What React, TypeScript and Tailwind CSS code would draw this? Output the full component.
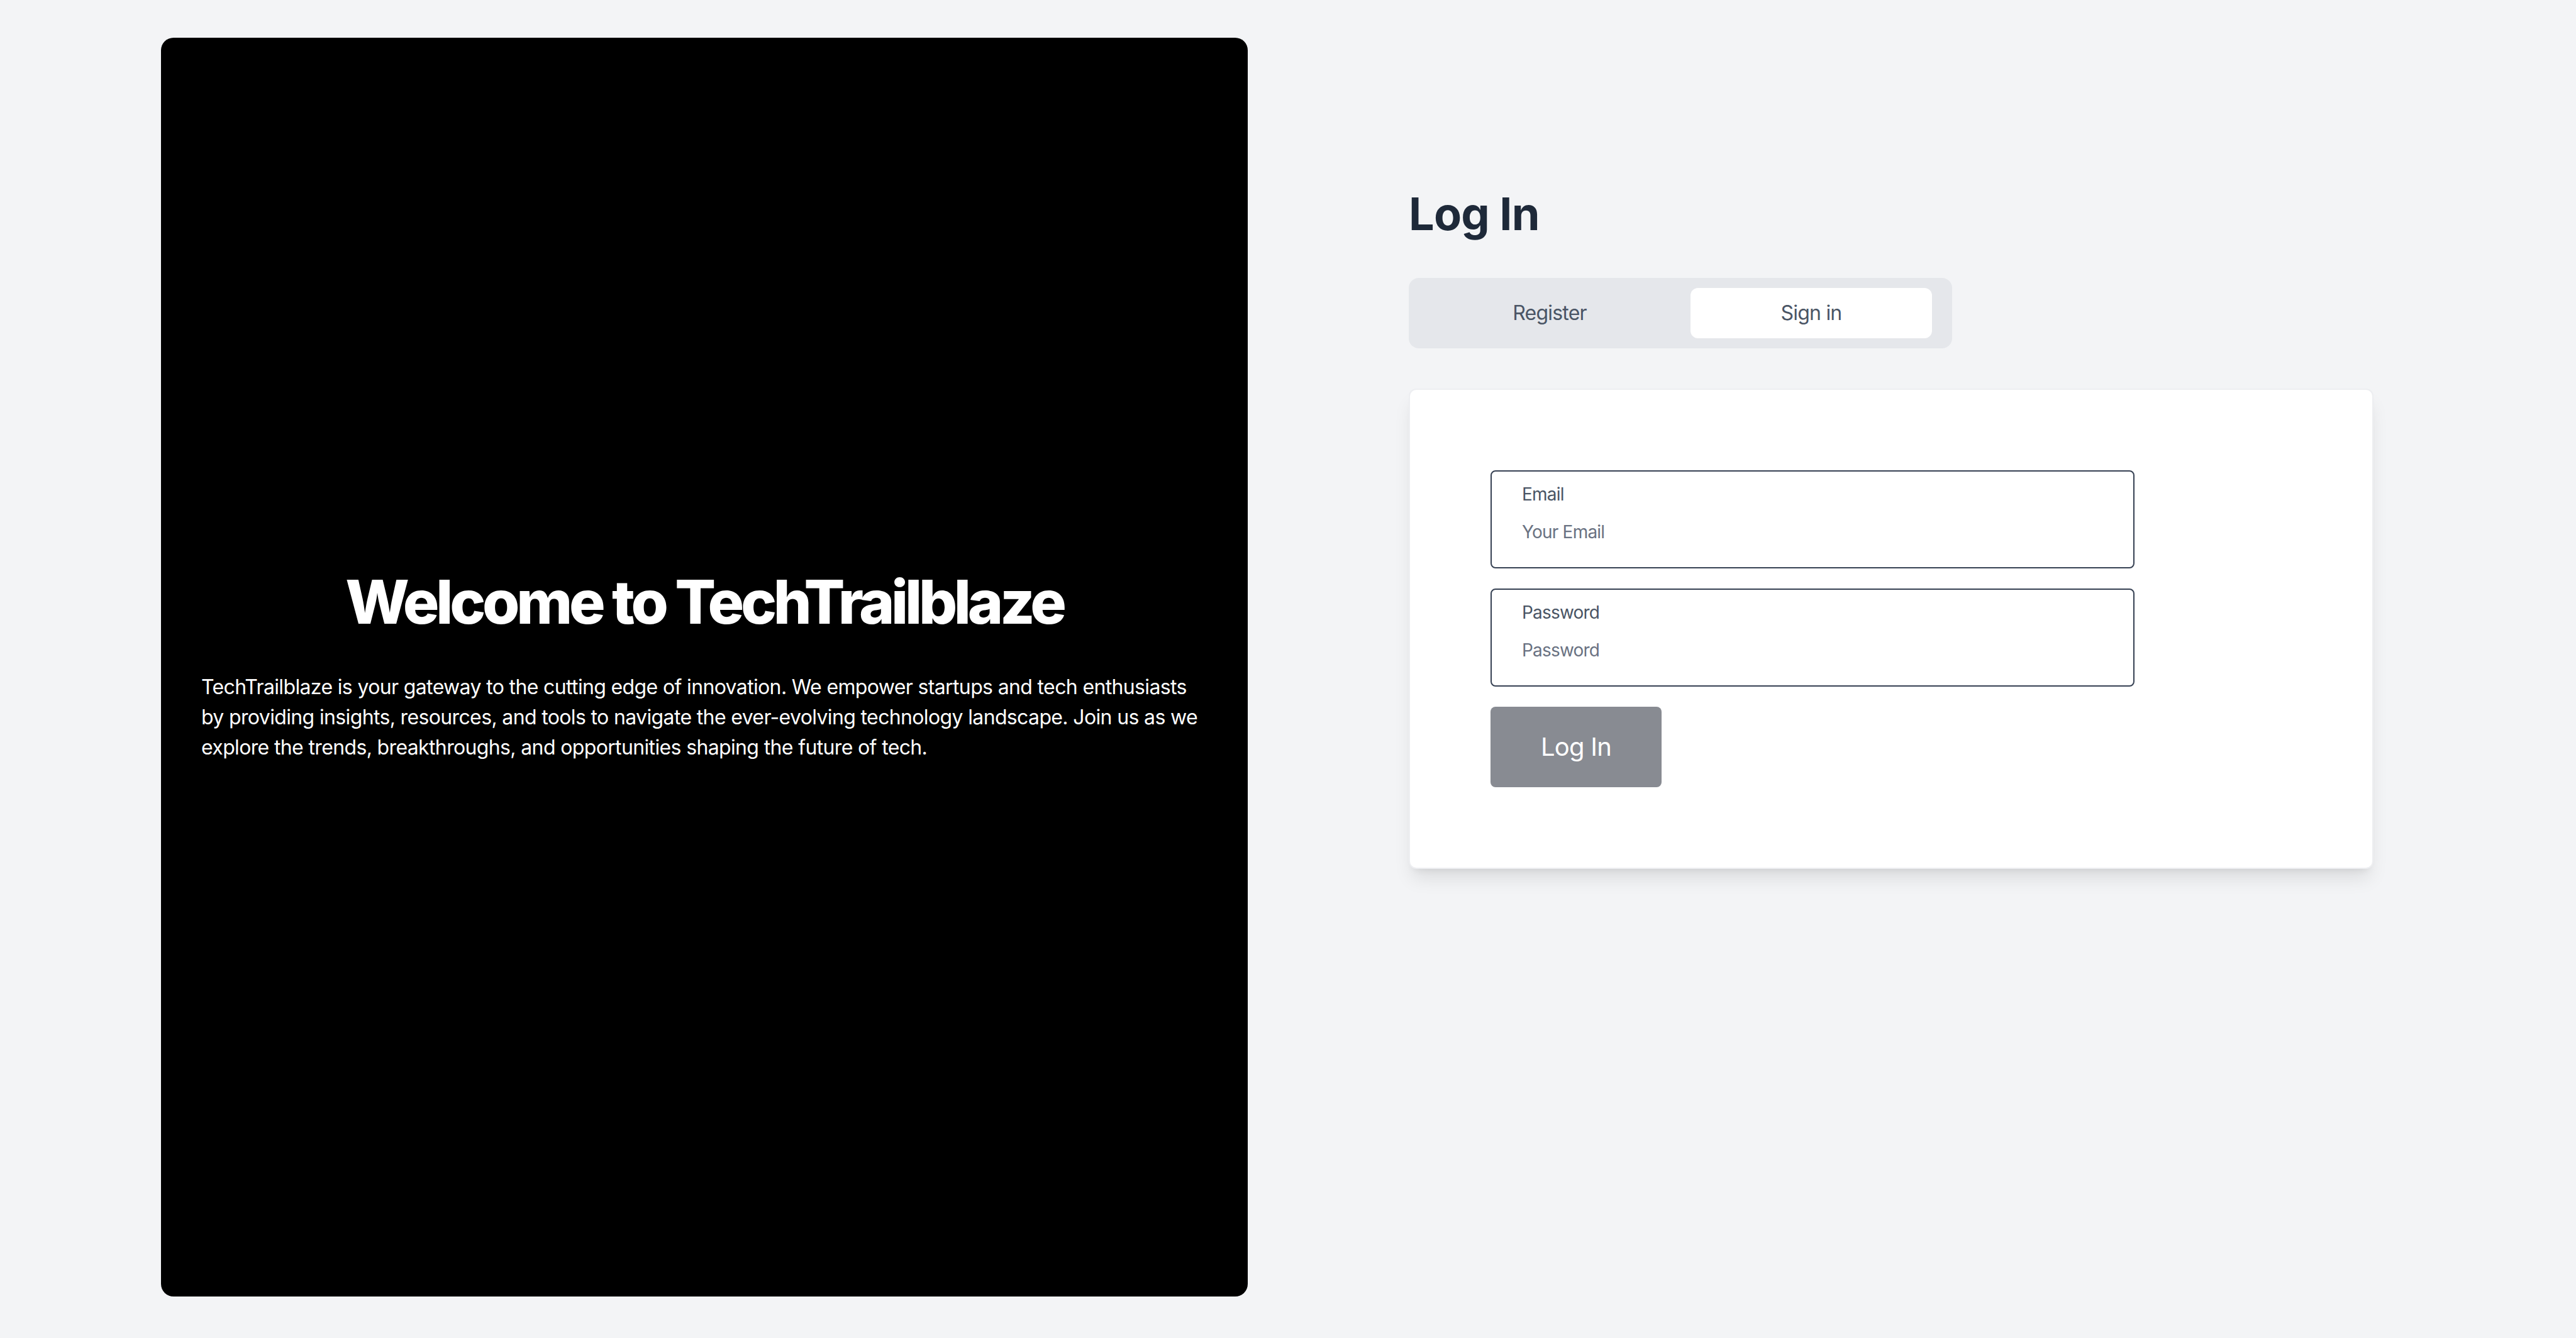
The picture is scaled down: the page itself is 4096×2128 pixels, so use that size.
export default function App() {
  return (
    <div className="[zoom:2] font-['Inter',sans-serif] tracking-[-0.025em]">
      <div className="flex h-[1064px] w-[2048px] bg-gray-100">
        {/* Intro panel */}
        <div className="pl-32 pt-[30px]">
          <div className="flex h-[1001px] w-[864px] flex-col justify-center rounded-[10px] bg-black p-8">
            <h2 className="mb-8 text-center text-5xl font-extrabold tracking-[-0.055em] text-white">
              Welcome to TechTrailblaze
            </h2>
            <p className="text-base leading-6 tracking-[-0.02em] text-white">
              TechTrailblaze is your gateway to the cutting edge of innovation. We empower startups and tech
              enthusiasts by providing insights, resources, and tools to navigate the ever-evolving technology
              landscape. Join us as we explore the trends, breakthroughs, and opportunities shaping the future of
              tech.
            </p>
          </div>
        </div>

        {/* Log in */}
        <div className="pl-32 pt-[150px]">
          <h1 className="mb-[31px] text-4xl font-bold text-gray-800">Log In</h1>

          <div className="flex w-[432px] gap-4 rounded-lg bg-gray-200 px-4 py-2">
            <button className="h-10 w-48 rounded-md text-base text-gray-600">Register</button>
            <button className="h-10 w-48 rounded-md bg-white text-base text-gray-600">Sign in</button>
          </div>

          <div className="mt-8 w-[767px] rounded-md border border-gray-200/70 bg-white p-16 shadow-lg">
            <form className="flex flex-col gap-4" onSubmit={e => e.preventDefault()}>
              <label className="block h-[78px] w-[512px] rounded border border-gray-700 px-6 pt-2">
                <span className="block text-sm leading-5 text-gray-600">Email</span>
                <input
                  type="email"
                  placeholder="Your Email"
                  className="mt-[10px] block w-full bg-transparent text-sm leading-5 text-gray-700 outline-none placeholder:text-gray-500"
                />
              </label>
              <label className="block h-[78px] w-[512px] rounded border border-gray-700 px-6 pt-2">
                <span className="block text-sm leading-5 text-gray-600">Password</span>
                <input
                  type="password"
                  placeholder="Password"
                  className="mt-[10px] block w-full bg-transparent text-sm leading-5 text-gray-700 outline-none placeholder:text-gray-500"
                />
              </label>
              <div>
                <button type="submit" className="h-16 rounded bg-[#888b92] px-10 text-xl text-white">
                  Log In
                </button>
              </div>
            </form>
          </div>
        </div>
      </div>
    </div>
  );
}
